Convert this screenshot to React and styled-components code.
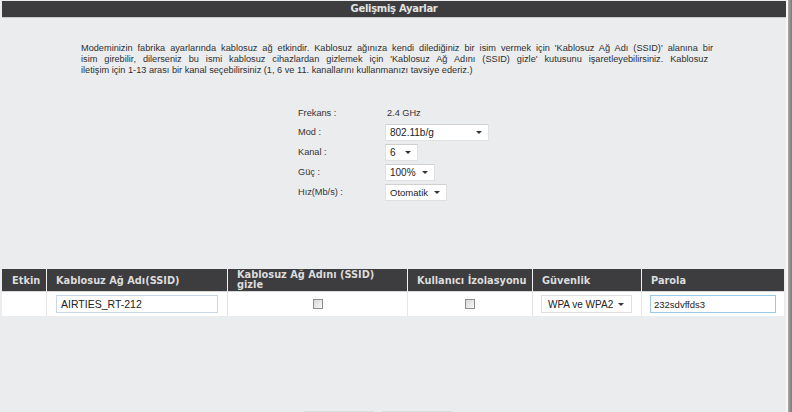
import React from "react";
import styled, { createGlobalStyle } from "styled-components";

const Global = createGlobalStyle`
  html, body { margin: 0; padding: 0; background: #ebecee; overflow: hidden; }
  body { font-family: "Liberation Sans", Arial, sans-serif; }
`;

const Frame = styled.div`
  display: flex;
  width: 792px;
  height: 412px;
  overflow: hidden;
  background: #ebecee;
`;

const Panel = styled.div`
  flex: 0 0 784px;
  margin-left: 2px;
  display: flex;
  flex-direction: column;
  position: relative;
`;

const Edge = styled.div`
  flex: 0 0 6px;
  display: flex;
  &::before {
    content: "";
    flex: 0 0 2px;
    background: #f7f7f8;
  }
  &::after {
    content: "";
    flex: 1;
    background: linear-gradient(to right, #a8a8a8, #7a7a7a);
  }
`;

const TitleBar = styled.div`
  height: 16px;
  margin-top: 1px;
  background: #3d3d3f;
  border-bottom: 1px solid #c9c9cb;
  color: #e2e2e2;
  font-family: "DejaVu Sans", Verdana, sans-serif;
  font-weight: bold;
  font-size: 10px;
  letter-spacing: -0.3px;
  line-height: 15px;
  text-align: center;
`;

const Intro = styled.div`
  margin: 25px 0 0 79px;
  width: 632px;
  font-size: 9.2px;
  line-height: 11px;
  color: #2f2f2f;
`;

const Line = styled.div`
  text-align: ${(p) => (p.$last ? "left" : "justify")};
  text-align-last: ${(p) => (p.$last ? "left" : "justify")};
  white-space: nowrap;
`;

const Form = styled.div`
  margin: 28px 0 0 296px;
  display: grid;
  grid-template-columns: 87px auto;
  grid-template-rows: 18px;
  grid-auto-rows: 20px;
  align-items: center;
  font-size: 9.2px;
  color: #333;
`;

const Label = styled.div``;

const Value = styled.div`
  padding-left: 2px;
`;

const Select = styled.div`
  width: ${(p) => p.$w}px;
  height: 17px;
  box-sizing: border-box;
  background: #fff;
  border: 1px solid #e0e0e0;
  border-top-color: #d0d0d0;
  display: flex;
  align-items: center;
  justify-content: space-between;
  padding: 0 6px 0 4px;
  font-size: ${(p) => p.$fs || 10}px;
  color: #222;
`;

const Caret = styled.span`
  width: 0;
  height: 0;
  border-left: 3px solid transparent;
  border-right: 3px solid transparent;
  border-top: 3px solid #333;
  margin-top: 1px;
`;

const Table = styled.div`
  margin-top: 67px;
  width: 782px;
  display: grid;
  grid-template-columns: 44px 181px 180px 125px 109px 143px;
`;

const Head = styled.div`
  background: #3d3d3f;
  height: 23px;
  box-sizing: border-box;
  border-left: ${(p) => (p.$first ? "none" : "1px solid #f2f2f2")};
  border-bottom: 1px solid #d8d8d8;
  color: #dcdcdc;
  font-family: "DejaVu Sans", Verdana, sans-serif;
  font-weight: bold;
  font-size: 9.8px;
  padding: 0 0 0 ${(p) => p.$pl ?? 9}px;
  display: flex;
  align-items: ${(p) => (p.$wrap ? "flex-start" : "center")};
  line-height: ${(p) => (p.$wrap ? "10px" : "normal")};
  padding-top: ${(p) => (p.$wrap ? "1px" : "0")};
  white-space: nowrap;
  overflow: hidden;
`;

const Cell = styled.div`
  background: #fff;
  height: 24px;
  box-sizing: border-box;
  border-left: ${(p) => (p.$first ? "none" : "1px solid #e6e6e6")};
  display: flex;
  align-items: center;
  justify-content: ${(p) => (p.$center ? "center" : "flex-start")};
  padding-left: ${(p) => p.$pl ?? 0}px;
`;

const TextBox = styled.div`
  width: ${(p) => p.$w}px;
  height: 18px;
  box-sizing: border-box;
  border: 1px solid ${(p) => p.$border};
  background: #fff;
  font-size: ${(p) => p.$fs}px;
  color: #222;
  padding-left: ${(p) => p.$pl}px;
  display: flex;
  align-items: center;
`;

const Check = styled.span`
  width: 10px;
  height: 10px;
  box-sizing: border-box;
  border: 1px solid #8d8d8d;
  background: linear-gradient(135deg, #d8d8d8, #f6f6f6);
`;

const SecSelect = styled(Select)`
  height: 18px;
  border-color: #dfdfdf;
  padding: 0 7px 0 6px;
`;

const Buttons = styled.div`
  margin-top: auto;
  margin-bottom: -11px;
  margin-left: 301px;
  display: flex;
  gap: 6px;
`;

const Btn = styled.div`
  width: 72px;
  height: 12px;
  box-sizing: border-box;
  border: 1px solid #dcdcdd;
  border-radius: 2px;
  background: #e8e9eb;
`;

export default function App() {
  return (
    <Frame>
      <Global />
      <Panel>
        <TitleBar>Gelişmiş Ayarlar</TitleBar>
        <Intro>
          <Line>
            Modeminizin fabrika ayarlarında kablosuz ağ etkindir. Kablosuz ağınıza kendi dilediğiniz bir isim vermek için 'Kablosuz Ağ Adı (SSID)' alanına bir
          </Line>
          <Line style={{ width: 627 }}>
            isim girebilir, dilerseniz bu ismi kablosuz cihazlardan gizlemek için 'Kablosuz Ağ Adını (SSID) gizle' kutusunu işaretleyebilirsiniz. Kablosuz
          </Line>
          <Line $last>
            iletişim için 1-13 arası bir kanal seçebilirsiniz (1, 6 ve 11. kanallarını kullanmanızı tavsiye ederiz.)
          </Line>
        </Intro>
        <Form>
          <Label>Frekans :</Label>
          <Value>2.4 GHz</Value>
          <Label>Mod :</Label>
          <Select $w={104}>802.11b/g<Caret /></Select>
          <Label>Kanal :</Label>
          <Select $w={33}>6<Caret /></Select>
          <Label>Güç :</Label>
          <Select $w={50}>100%<Caret /></Select>
          <Label>Hız(Mb/s) :</Label>
          <Select $w={62} $fs={9.5}>Otomatik<Caret /></Select>
        </Form>
        <Table>
          <Head $first $pl={10}>Etkin</Head>
          <Head>Kablosuz Ağ Adı(SSID)</Head>
          <Head $wrap>Kablosuz Ağ Adını (SSID)<br />gizle</Head>
          <Head>Kullanıcı İzolasyonu</Head>
          <Head>Güvenlik</Head>
          <Head>Parola</Head>
          <Cell $first />
          <Cell $pl={9}>
            <TextBox $w={162} $border="#c8d6e6" $fs={10.5} $pl={4}>AIRTIES_RT-212</TextBox>
          </Cell>
          <Cell $center><Check /></Cell>
          <Cell $center><Check /></Cell>
          <Cell $pl={8}>
            <SecSelect $w={91}>WPA ve WPA2<Caret /></SecSelect>
          </Cell>
          <Cell $pl={8}>
            <TextBox $w={126} $border="#9cc8ea" $fs={9.5} $pl={3}>232sdvffds3</TextBox>
          </Cell>
        </Table>
        <Buttons>
          <Btn />
          <Btn />
        </Buttons>
      </Panel>
      <Edge />
    </Frame>
  );
}
